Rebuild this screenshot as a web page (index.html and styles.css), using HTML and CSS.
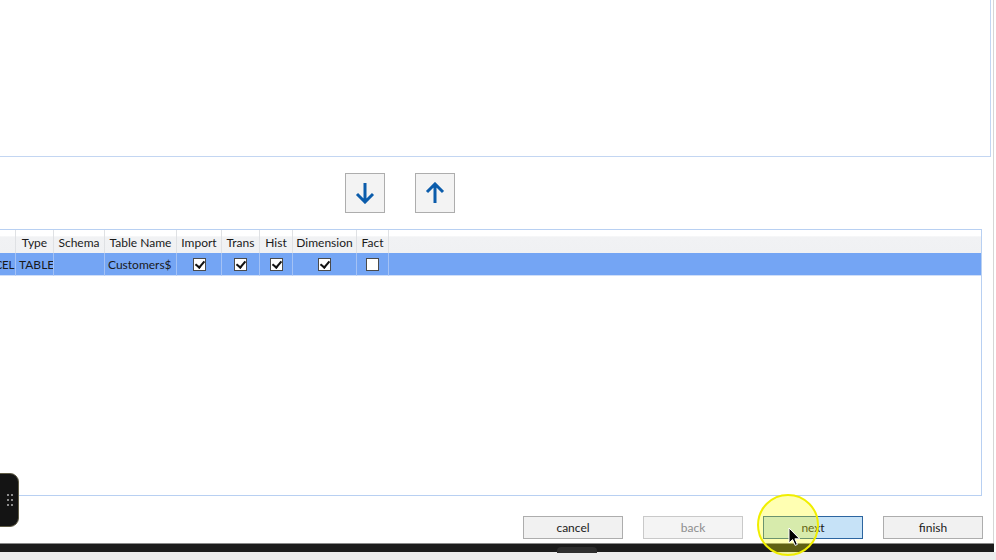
FILE: index.html
```html
<!DOCTYPE html>
<html lang="en">
<head>
    <meta charset="UTF-8">
    <title>Import tables</title>
    <link rel="stylesheet" href="styles.css">
</head>
<body>
    <div class="window">
        <!-- source list (scrolled) -->
        <div class="panel"></div>

        <!-- move buttons -->
        <div class="arrows">
            <button class="arrow-btn" title="down">
                <svg width="20" height="22" viewBox="0 0 20 22"><path d="M10 1V20M2 12L10 20L18 12" fill="none" stroke="#0b5cab" stroke-width="3"/></svg>
            </button>
            <button class="arrow-btn" title="up">
                <svg width="20" height="22" viewBox="0 0 20 22"><path d="M10 21V2M2 10L10 2L18 10" fill="none" stroke="#0b5cab" stroke-width="3"/></svg>
            </button>
        </div>

        <!-- selected tables -->
        <div class="grid-box">
            <div class="grid">
                <div class="hd"></div>
                <div class="hd">Type</div>
                <div class="hd">Schema</div>
                <div class="hd">Table Name</div>
                <div class="hd">Import</div>
                <div class="hd">Trans</div>
                <div class="hd">Hist</div>
                <div class="hd">Dimension</div>
                <div class="hd">Fact</div>
                <div class="hd last"></div>

                <div class="cell first">CEL</div>
                <div class="cell">TABLE</div>
                <div class="cell"></div>
                <div class="cell">Customers$</div>
                <div class="cell chk"><span class="box on"></span></div>
                <div class="cell chk"><span class="box on"></span></div>
                <div class="cell chk"><span class="box on"></span></div>
                <div class="cell chk"><span class="box on"></span></div>
                <div class="cell chk"><span class="box"></span></div>
                <div class="cell last"></div>
            </div>
        </div>

        <div class="actions">
            <button class="btn">cancel</button>
            <button class="btn disabled">back</button>
            <button class="btn default">next</button>
            <button class="btn">finish</button>
        </div>
    </div>
    <div class="taskbar"><span class="tab"></span></div>
    <div class="strip"></div>

    <!-- overlays -->
    <div class="handle">
        <span></span><span></span><span></span><span></span><span></span><span></span>
    </div>
    <div class="click-ring"></div>
    <svg class="cursor" width="13" height="20" viewBox="0 0 13 20"><path d="M1 1V16L4.6 12.6L7.2 18.4L9.4 17.4L6.9 11.8H11.6Z" fill="#000" stroke="#fff" stroke-width="1"/></svg>
</body>
</html>
```

FILE: styles.css
```css
* {
    box-sizing: border-box;
}
body {
    margin: 0;
    background-color: #fff;
    font-family: 'Lato', 'Noto Sans', sans-serif;
    font-size: 12px;
    color: #1a1a1a;
    overflow: hidden;
    height: 560px;
    position: relative;
}
.window {
    width: 994px;
    height: 543px;
    border-right: 1px solid #d6d6d6;
    padding-right: 10px;
}
.panel {
    width: 991px;
    height: 157px;
    border-right: 1px solid #c3d6f2;
    border-bottom: 1px solid #c3d6f2;
}
.arrows {
    display: flex;
    gap: 30px;
    padding-top: 16px;
    padding-left: 345px;
}
.arrow-btn {
    width: 40px;
    height: 40px;
    padding: 0;
    background-color: #f3f3f3;
    border: 1px solid #adadad;
    display: flex;
    align-items: center;
    justify-content: center;
}
.grid-box {
    margin-top: 16px;
    width: 982px;
    height: 267px;
    border: 1px solid #b8d0f2;
    border-left: none;
}
.grid {
    display: grid;
    grid-template-columns: 16px 38px 51px 72px 45px 38px 33px 64px 32px 1fr;
    grid-template-rows: 23px 23px;
}
.hd {
    background: linear-gradient(#ffffff 0, #ffffff 25%, #f1f2f4 30%, #f0f1f3 100%);
    border-right: 1px solid #dfe1e4;
    text-align: center;
    line-height: 23px;
    padding-top: 1px;
    white-space: nowrap;
}
.cell {
    background-color: #74a5f4;
    border-right: 1px solid #a4c2f5;
    border-bottom: 1px solid #cfdef8;
    line-height: 22px;
    padding-top: 1px;
    padding-left: 3px;
    white-space: nowrap;
    overflow: hidden;
}
.cell.first {
    padding-left: 0;
    padding-right: 1px;
    font-size: 11.5px;
    letter-spacing: -0.3px;
    text-align: right;
    direction: rtl;
    overflow: visible;
}
.hd.last, .cell.last {
    border-right: none;
}
.chk {
    padding-left: 0;
    display: flex;
    align-items: center;
    justify-content: center;
}
.box {
    width: 13px;
    height: 13px;
    background-color: #fff;
    border: 1px solid #4a4a4a;
    position: relative;
}
.box.on::after {
    content: "";
    position: absolute;
    left: 3px;
    top: 0px;
    width: 4px;
    height: 7px;
    border-right: 2px solid #111;
    border-bottom: 2px solid #111;
    transform: rotate(40deg);
}
.actions {
    display: flex;
    justify-content: flex-end;
    gap: 20px;
    margin-top: 20px;
}
.btn {
    width: 100px;
    height: 23px;
    padding: 0;
    background-color: #f1f1f1;
    border: 1px solid #adadad;
    font-family: inherit;
    font-size: 12px;
    color: #1a1a1a;
}
.btn.disabled {
    color: #8d8d8d;
    border-color: #c9c9c9;
    background-color: #f4f4f4;
}
.btn.default {
    background-color: #c6e2f7;
    border-color: #2c65a0;
}
.taskbar {
    width: 994px;
    height: 9px;
    background-color: #1c1c1c;
    border-top: 1px solid #8a8a8a;
    position: relative;
}
.tab {
    position: absolute;
    left: 557px;
    top: 3px;
    width: 40px;
    height: 6px;
    background-color: #2e2e2e;
    border-radius: 4px 4px 0 0;
}
.strip {
    height: 8px;
    background-color: #ededed;
}
.handle {
    position: absolute;
    left: -2px;
    top: 473px;
    width: 21px;
    height: 54px;
    background-color: #141414;
    border: 1px solid #5e5a44;
    border-radius: 0 9px 9px 0;
    display: grid;
    grid-template-columns: 2px 2px;
    grid-template-rows: 2px 2px 2px;
    column-gap: 2px;
    row-gap: 3px;
    align-content: center;
    padding-left: 8px;
}
.handle span {
    background-color: #b5b5b5;
    border-radius: 1px;
}
.click-ring {
    position: absolute;
    left: 757px;
    top: 494px;
    width: 62px;
    height: 62px;
    border: 2px solid #f0ee00;
    border-radius: 50%;
    background-color: rgba(255, 255, 0, 0.3);
}
.cursor {
    position: absolute;
    left: 788px;
    top: 527px;
}
```
